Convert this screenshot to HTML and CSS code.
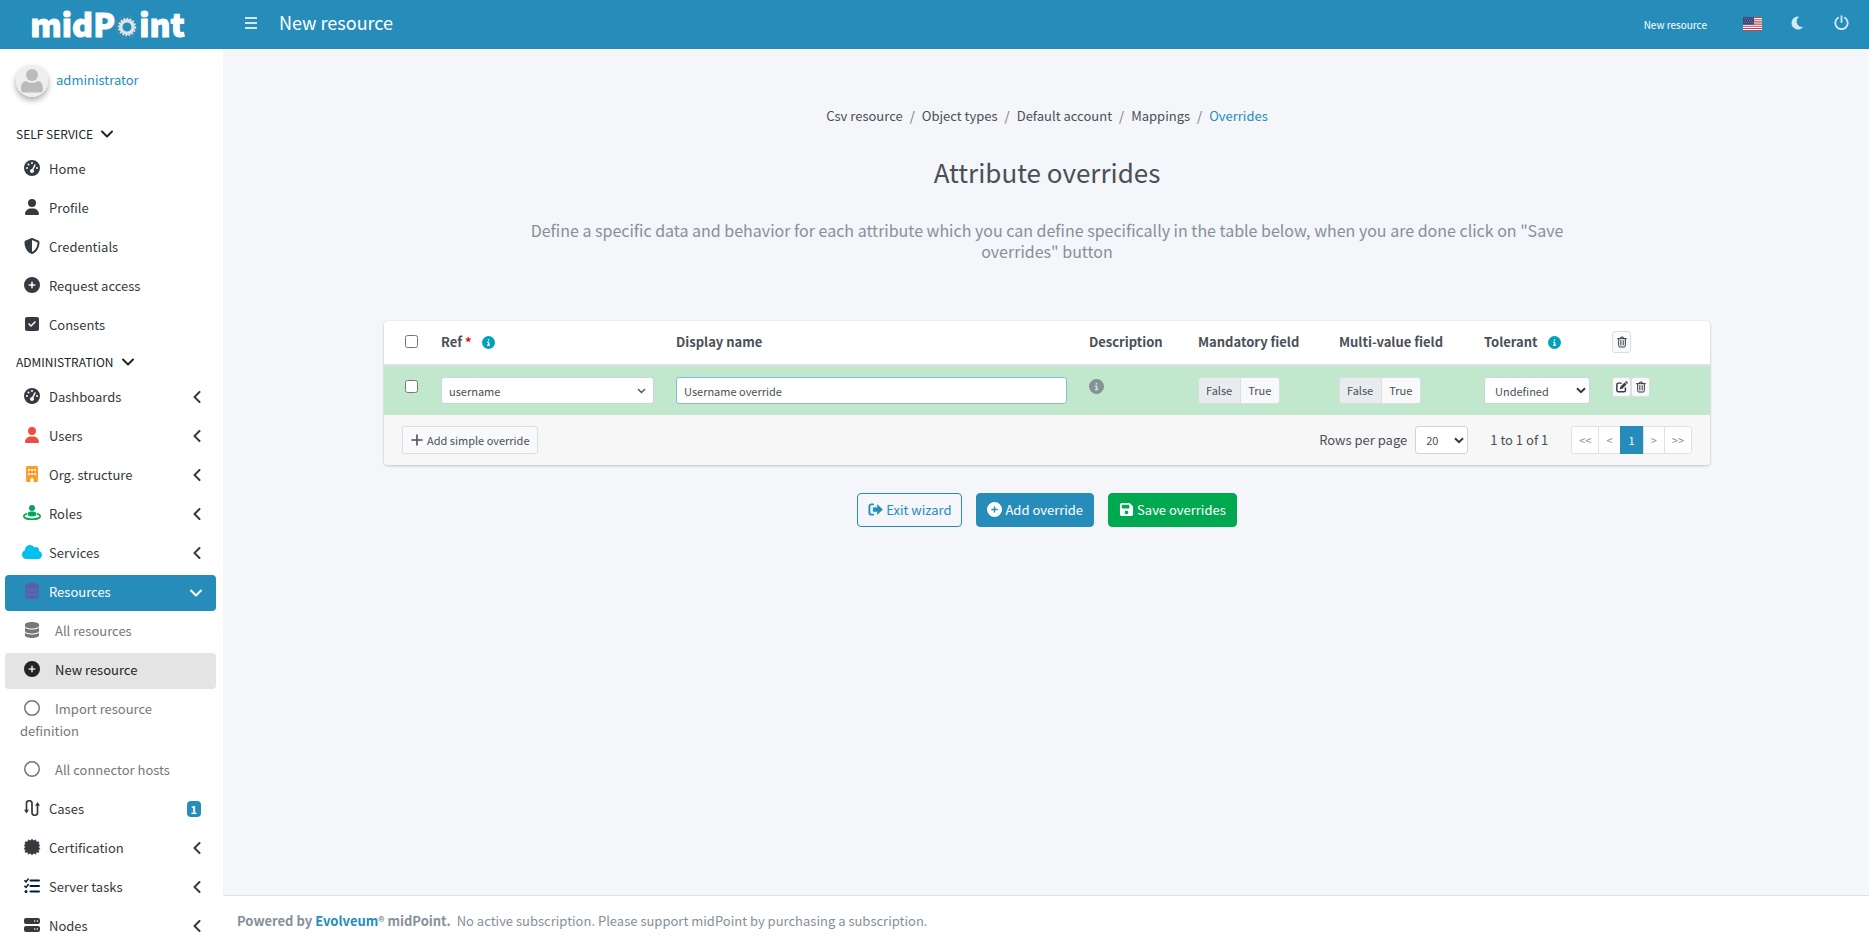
FILE: index.html
```
<!DOCTYPE html>
<html lang="en">
<head>
<meta charset="utf-8">
<title>New resource</title>
<link rel="stylesheet" href="styles.css">
</head>
<body>
<svg class="sprite" aria-hidden="true">
  <symbol id="i-gauge" viewBox="0 0 512 512"><path fill-rule="evenodd" d="M256 0a256 256 0 1 1 0 512 256 256 0 1 1 0-512zM288 96a32 32 0 1 0-64 0 32 32 0 1 0 64 0zM256 416c35.300 0 64-28.700 64-64 0-16.200-6-31.100-16-42.300l69.500-138.900c5.900-11.900 1.100-26.300-10.700-32.200s-26.300-1.100-32.200 10.700L261.100 288.200c-1.700-.1-3.400-.2-5.100-.2-35.300 0-64 28.700-64 64s28.700 64 64 64zM176 144a32 32 0 1 0-64 0 32 32 0 1 0 64 0zM96 288a32 32 0 1 0 0-64 32 32 0 1 0 0 64zm352-32a32 32 0 1 0-64 0 32 32 0 1 0 64 0z"/></symbol>
  <symbol id="i-user" viewBox="0 0 448 512"><path d="M224 256A128 128 0 1 0 224 0a128 128 0 1 0 0 256zm-45.700 48C79.800 304 0 383.800 0 482.300 0 498.700 13.300 512 29.700 512H418.300c16.400 0 29.700-13.300 29.700-29.700C448 383.800 368.200 304 269.700 304H178.300z"/></symbol>
  <symbol id="i-shield" viewBox="0 0 512 512"><path fill-rule="evenodd" d="M256 0c5 0 9 1 13 3l188 80c22 9 39 31 39 57 0 99-41 281-214 363-16 8-36 8-52 0C57 421 16 239 16 140c0-26 17-48 39-57L243 3c4-2 8-3 13-3zm0 67v378c139-67 176-216 177-304L256 67z"/></symbol>
  <symbol id="i-plus-circle" viewBox="0 0 512 512"><path fill-rule="evenodd" d="M256 512A256 256 0 1 0 256 0a256 256 0 1 0 0 512zM232 344V280H168c-13.300 0-24-10.700-24-24s10.700-24 24-24h64V168c0-13.300 10.700-24 24-24s24 10.700 24 24v64h64c13.300 0 24 10.700 24 24s-10.700 24-24 24H280v64c0 13.300-10.700 24-24 24s-24-10.700-24-24z"/></symbol>
  <symbol id="i-check" viewBox="0 0 448 512"><path fill-rule="evenodd" d="M64 32C28.700 32 0 60.700 0 96V416c0 35.300 28.700 64 64 64H384c35.300 0 64-28.700 64-64V96c0-35.300-28.700-64-64-64H64zM337 209L209 337c-9.400 9.400-24.600 9.400-33.900 0l-64-64c-9.400-9.400-9.400-24.600 0-33.900s24.600-9.400 33.900 0l47 47L303 175c9.400-9.400 24.600-9.400 33.900 0s9.400 24.600 0 33.900z"/></symbol>
  <symbol id="i-building" viewBox="0 0 384 512"><path fill-rule="evenodd" d="M48 0C21.500 0 0 21.500 0 48V464c0 26.500 21.500 48 48 48h96V432c0-26.500 21.500-48 48-48s48 21.500 48 48v80h96c26.500 0 48-21.500 48-48V48c0-26.500-21.500-48-48-48H48zM64 112c0-9 7-16 16-16h32c9 0 16 7 16 16v32c0 9-7 16-16 16H80c-9 0-16-7-16-16v-32zm96 0c0-9 7-16 16-16h32c9 0 16 7 16 16v32c0 9-7 16-16 16h-32c-9 0-16-7-16-16v-32zm96 0c0-9 7-16 16-16h32c9 0 16 7 16 16v32c0 9-7 16-16 16h-32c-9 0-16-7-16-16v-32zM64 240c0-9 7-16 16-16h32c9 0 16 7 16 16v32c0 9-7 16-16 16H80c-9 0-16-7-16-16v-32zm96 0c0-9 7-16 16-16h32c9 0 16 7 16 16v32c0 9-7 16-16 16h-32c-9 0-16-7-16-16v-32zm96 0c0-9 7-16 16-16h32c9 0 16 7 16 16v32c0 9-7 16-16 16h-32c-9 0-16-7-16-16v-32z"/></symbol>
  <symbol id="i-role" viewBox="0 0 576 512"><circle cx="288" cy="96" r="96"/><path d="M230 208h116c44 0 78 35 78 78v28c0 30-61 54-136 54s-136-24-136-54v-28c0-43 34-78 78-78z"/><path d="M110 284C60 302 26 326 26 356c0 56 117 98 262 98s262-42 262-98c0-30-34-54-84-72" fill="none" stroke="currentColor" stroke-width="52" stroke-linecap="round"/></symbol>
  <symbol id="i-cloud" viewBox="0 0 640 512"><path d="M0 336c0 79.500 64.500 144 144 144H512c70.700 0 128-57.300 128-128c0-61.900-44-113.600-102.400-125.400c4.100-10.700 6.400-22.400 6.400-34.600c0-53-43-96-96-96c-19.700 0-38.100 6-53.300 16.200C367 64.200 315.300 32 256 32C167.600 32 96 103.600 96 192c0 2.700 .1 5.400 .2 8.100C40.200 219.800 0 273.200 0 336z"/></symbol>
  <symbol id="i-db" viewBox="0 0 448 512"><path d="M448 80v48c0 44.200-100.300 80-224 80S0 172.200 0 128V80C0 35.800 100.300 0 224 0S448 35.800 448 80zM393.200 214.700c20.800-7.400 39.900-16.900 54.800-28.600V288c0 44.200-100.300 80-224 80S0 332.200 0 288V186.100c14.900 11.800 34 21.200 54.800 28.600C99.700 230.700 159.500 240 224 240s124.300-9.300 169.200-25.300zM0 346.100c14.900 11.800 34 21.200 54.800 28.600C99.700 390.700 159.500 400 224 400s124.300-9.300 169.200-25.300c20.800-7.400 39.900-16.900 54.800-28.600V432c0 44.200-100.300 80-224 80S0 476.200 0 432V346.100z"/></symbol>
  <symbol id="i-circle" viewBox="0 0 512 512"><circle cx="256" cy="256" r="232" fill="none" stroke="currentColor" stroke-width="48"/></symbol>
  <symbol id="i-route" viewBox="0 0 16 16"><path d="M2.500 11V3.500a2.700 2.700 0 0 1 5.500 0v9a2.700 2.700 0 0 0 5.500 0V4.500" fill="none" stroke="currentColor" stroke-width="1.700"/><path d="M0 9.800h5L2.500 13.500zM11 5.800h5L13.500 2z"/></symbol>
  <symbol id="i-cert" viewBox="-16 -16 32 32"><path d="M0-16l3.200 3.600L7.400-14.400l1.500 4.500 5-.7-.5 4.900L16-2.900 12.800 0 16 3l-2.600 3 .5 4.800-5-.9-1.500 4.600-4.200-2.100L0 16l-3.200-3.600-4.200 2.100-1.500-4.600-5 .9.500-4.800L-16 3l3.200-3L-16-2.900l2.600-2.800-.5-4.900 5 .7 1.500-4.500 4.200 2z" stroke="currentColor" stroke-width="1"/></symbol>
  <symbol id="i-tasks" viewBox="0 0 16 16"><path d="M6.500 2.500H15M6.500 8H15M6.500 13.500H15" fill="none" stroke="currentColor" stroke-width="2" stroke-linecap="round"/><path d="M.8 2.700L2 3.900 4.300 1M.8 8.200L2 9.400l2.300-2.900" fill="none" stroke="currentColor" stroke-width="1.500" stroke-linecap="round"/><circle cx="2" cy="13.500" r="1.500"/></symbol>
  <symbol id="i-server" viewBox="0 0 512 512"><path fill-rule="evenodd" d="M64 32C28.700 32 0 60.700 0 96v64c0 35.300 28.700 64 64 64H448c35.300 0 64-28.700 64-64V96c0-35.300-28.700-64-64-64H64zM344 104a24 24 0 1 1 0 48 24 24 0 1 1 0-48zm64 24a24 24 0 1 1 48 0 24 24 0 1 1-48 0zM64 288c-35.300 0-64 28.700-64 64v64c0 35.300 28.700 64 64 64H448c35.300 0 64-28.700 64-64V352c0-35.300-28.700-64-64-64H64zM344 360a24 24 0 1 1 0 48 24 24 0 1 1 0-48zm56 24a24 24 0 1 1 48 0 24 24 0 1 1-48 0z"/></symbol>
  <symbol id="i-left" viewBox="0 0 8 12"><path d="M6.500 1L1.500 6l5 5" fill="none" stroke="currentColor" stroke-width="2" stroke-linecap="round" stroke-linejoin="round"/></symbol>
  <symbol id="i-down" viewBox="0 0 12 8"><path d="M1 1.500l5 5 5-5" fill="none" stroke="currentColor" stroke-width="2" stroke-linecap="round" stroke-linejoin="round"/></symbol>
  <symbol id="i-info" viewBox="0 0 512 512"><path fill-rule="evenodd" d="M256 512A256 256 0 1 0 256 0a256 256 0 1 0 0 512zM216 336h24V272H216c-13.300 0-24-10.700-24-24s10.700-24 24-24h48c13.300 0 24 10.700 24 24v88h8c13.300 0 24 10.700 24 24s-10.700 24-24 24H216c-13.300 0-24-10.700-24-24s10.700-24 24-24zm40-208a32 32 0 1 1 0 64 32 32 0 1 1 0-64z"/></symbol>
  <symbol id="i-save" viewBox="0 0 448 512"><path fill-rule="evenodd" d="M64 32C28.700 32 0 60.700 0 96V416c0 35.300 28.700 64 64 64H384c35.300 0 64-28.700 64-64V173.300c0-17-6.700-33.300-18.700-45.300L352 50.700C340 38.700 323.700 32 306.700 32H64zm0 96c0-17.700 14.300-32 32-32H288c17.700 0 32 14.300 32 32v64c0 17.700-14.300 32-32 32H96c-17.700 0-32-14.300-32-32V128zM224 288a64 64 0 1 1 0 128 64 64 0 1 1 0-128z"/></symbol>
  <symbol id="i-exit" viewBox="0 0 16 16"><path d="M5.500 2.500H3.500a2 2 0 0 0-2 2v7a2 2 0 0 0 2 2h2" fill="none" stroke="currentColor" stroke-width="2" stroke-linecap="round"/><path d="M10 2.800L15.500 8 10 13.200V10H5.500V6H10z" stroke="currentColor" stroke-width=".6" stroke-linejoin="round"/></symbol>
  <symbol id="i-trash" viewBox="0 0 12 14"><path d="M.7 3h10.600M3.800 3l.9-1.900h2.600L8.200 3M2 3v8.500a1.500 1.500 0 0 0 1.500 1.500h5a1.500 1.500 0 0 0 1.500-1.500V3" fill="none" stroke="currentColor" stroke-width="1.200" stroke-linecap="round"/><path d="M4.200 5.300v5.300M6 5.300v5.300M7.800 5.300v5.300" fill="none" stroke="currentColor" stroke-width=".8" stroke-linecap="round"/></symbol>
  <symbol id="i-edit" viewBox="0 0 14 14"><path d="M6 2.500H2.700A1.700 1.700 0 0 0 1 4.200v6.600a1.700 1.700 0 0 0 1.700 1.700h6.600a1.700 1.700 0 0 0 1.700-1.700V8" fill="none" stroke="currentColor" stroke-width="1.700" stroke-linecap="round"/><path d="M4.300 9.700l.8-3L10 1.800l2.200 2.200-4.900 4.900zM10.600 1.200l.6-.6c.4-.4 1-.4 1.400 0l.8.8c.4.400.4 1 0 1.400l-.6.600z"/></symbol>
  <symbol id="i-plus" viewBox="0 0 12 12"><path d="M6 1v10M1 6h10" stroke="currentColor" stroke-width="1.600" stroke-linecap="round"/></symbol>
  <symbol id="i-bars" viewBox="0 0 14 12"><path d="M1 1h12M1 6h12M1 11h12" stroke="currentColor" stroke-width="2"/></symbol>
  <symbol id="i-moon" viewBox="0 0 12 14"><path d="M7 .5A6.500 6.500 0 1 0 11.700 11.500c.2-.3 0-.6-.3-.5A5.600 5.600 0 0 1 7.600 1.200c.3-.2.200-.6-.1-.7z"/></symbol>
  <symbol id="i-power" viewBox="0 0 14 14"><path d="M7 1v5.500M3.800 2.600a5.800 5.800 0 1 0 6.400 0" fill="none" stroke="currentColor" stroke-width="1.700" stroke-linecap="round"/></symbol>
</svg>

<div class="layout">
  <aside class="sidebar">
    <a class="brand" href="#" aria-label="midPoint"><span>midP</span><svg class="brand-gear" viewBox="0 0 24 24"><circle cx="12" cy="12" r="11.500" fill="none" stroke="#5a8ba5" stroke-width="1" stroke-dasharray="6 3"/><circle cx="12" cy="12" r="8.300" fill="none" stroke="#dfe3e6" stroke-width="1.800" stroke-dasharray="1.800 1.400"/><circle cx="12" cy="12" r="6.200" fill="none" stroke="#dfe3e6" stroke-width="3.400"/></svg><span>int</span></a>
    <div class="user">
      <svg class="avatar" viewBox="0 0 32 32"><circle cx="16" cy="16" r="16" fill="#eee"/><circle cx="16" cy="10" r="6" fill="#bbb"/><path d="M5 24c0-5 2-8 5-8 4 2.500 8 2.500 12 0 3 0 5 3 5 8 0 2-1 3.500-3 3.500H8c-2 0-3-1.500-3-3.500z" fill="#bbb"/></svg>
      <a href="#">administrator</a>
    </div>
    <nav class="menu">
      <button class="group">SELF SERVICE<svg class="chev-down"><use href="#i-down"/></svg></button>
      <a class="item" href="#"><svg class="icon"><use href="#i-gauge"/></svg>Home</a>
      <a class="item" href="#"><svg class="icon"><use href="#i-user"/></svg>Profile</a>
      <a class="item" href="#"><svg class="icon"><use href="#i-shield"/></svg>Credentials</a>
      <a class="item" href="#"><svg class="icon"><use href="#i-plus-circle"/></svg>Request access</a>
      <a class="item" href="#"><svg class="icon"><use href="#i-check"/></svg>Consents</a>
      <button class="group">ADMINISTRATION<svg class="chev-down"><use href="#i-down"/></svg></button>
      <a class="item" href="#"><svg class="icon"><use href="#i-gauge"/></svg>Dashboards<svg class="chev-left"><use href="#i-left"/></svg></a>
      <a class="item" href="#"><svg class="icon red"><use href="#i-user"/></svg>Users<svg class="chev-left"><use href="#i-left"/></svg></a>
      <a class="item" href="#"><svg class="icon orange"><use href="#i-building"/></svg>Org. structure<svg class="chev-left"><use href="#i-left"/></svg></a>
      <a class="item" href="#"><svg class="icon green"><use href="#i-role"/></svg>Roles<svg class="chev-left"><use href="#i-left"/></svg></a>
      <a class="item" href="#"><svg class="icon cyan"><use href="#i-cloud"/></svg>Services<svg class="chev-left"><use href="#i-left"/></svg></a>
      <a class="item active" href="#"><svg class="icon purple"><use href="#i-db"/></svg>Resources<svg class="chev-down"><use href="#i-down"/></svg></a>
      <a class="item sub" href="#"><svg class="icon"><use href="#i-db"/></svg>All resources</a>
      <a class="item sub current" href="#"><svg class="icon"><use href="#i-plus-circle"/></svg>New resource</a>
      <a class="item sub" href="#"><svg class="icon"><use href="#i-circle"/></svg>Import resource definition</a>
      <a class="item sub" href="#"><svg class="icon"><use href="#i-circle"/></svg>All connector hosts</a>
      <a class="item" href="#"><svg class="icon"><use href="#i-route"/></svg>Cases<span class="badge">1</span></a>
      <a class="item" href="#"><svg class="icon"><use href="#i-cert"/></svg>Certification<svg class="chev-left"><use href="#i-left"/></svg></a>
      <a class="item" href="#"><svg class="icon navy"><use href="#i-tasks"/></svg>Server tasks<svg class="chev-left"><use href="#i-left"/></svg></a>
      <a class="item" href="#"><svg class="icon"><use href="#i-server"/></svg>Nodes<svg class="chev-left"><use href="#i-left"/></svg></a>
    </nav>
  </aside>

  <div class="page">
    <header class="topbar">
      <button class="bars" aria-label="Toggle menu"><svg><use href="#i-bars"/></svg></button>
      <h1>New resource</h1>
      <a class="crumb-link" href="#">New resource</a>
      <a class="tool" href="#" aria-label="Language"><svg class="flag" viewBox="0 0 19 14"><rect width="19" height="14" fill="#fff"/><path d="M0 .5h19M0 2.700h19M0 4.900h19M0 7.100h19M0 9.300h19M0 11.500h19M0 13.500h19" stroke="#c8414f" stroke-width="1.100"/><rect width="11" height="7.600" fill="#3b4a7c"/><path d="M1 1.500h9M2 3.500h8M1 5.500h9" stroke="#8d97b8" stroke-width=".7" stroke-dasharray=".8 1.200"/></svg></a>
      <button class="tool moon" aria-label="Dark mode"><svg><use href="#i-moon"/></svg></button>
      <button class="tool power" aria-label="Log out"><svg><use href="#i-power"/></svg></button>
    </header>

    <main class="content">
      <ol class="breadcrumb">
        <li><a href="#">Csv resource</a></li><li><a href="#">Object types</a></li><li><a href="#">Default account</a></li><li><a href="#">Mappings</a></li><li class="here">Overrides</li>
      </ol>
      <h2>Attribute overrides</h2>
      <p class="lead">Define a specific data and behavior for each attribute which you can define specifically in the table below, when you are done click on "Save overrides" button</p>

      <section class="card">
        <table>
          <colgroup><col class="c-check"><col class="c-ref"><col><col class="c-desc"><col class="c-mand"><col class="c-multi"><col class="c-tol"><col class="c-act"></colgroup>
          <thead>
            <tr>
              <th class="check"><input type="checkbox" aria-label="Select all"></th>
              <th>Ref <span class="req">*</span><svg class="info"><use href="#i-info"/></svg></th>
              <th>Display name</th>
              <th>Description</th>
              <th>Mandatory field</th>
              <th>Multi-value field</th>
              <th>Tolerant<svg class="info"><use href="#i-info"/></svg></th>
              <th><button class="mini" aria-label="Delete selected"><svg><use href="#i-trash"/></svg></button></th>
            </tr>
          </thead>
          <tbody>
            <tr>
              <td class="check"><input type="checkbox" aria-label="Select row"></td>
              <td><select class="field thin" aria-label="Ref"><option>username</option></select></td>
              <td><input class="field focus" type="text" value="Username override" aria-label="Display name"></td>
              <td><svg class="desc"><use href="#i-info"/></svg></td>
              <td><div class="toggle"><button class="on">False</button><button>True</button></div></td>
              <td><div class="toggle"><button class="on">False</button><button>True</button></div></td>
              <td><select class="field bold" aria-label="Tolerant"><option>Undefined</option></select></td>
              <td><div class="minis"><button class="mini" aria-label="Edit"><svg class="pen"><use href="#i-edit"/></svg></button><button class="mini" aria-label="Delete"><svg><use href="#i-trash"/></svg></button></div></td>
            </tr>
          </tbody>
        </table>
        <div class="card-footer">
          <button class="add"><svg><use href="#i-plus"/></svg>Add simple override</button>
          <label for="rows">Rows per page</label>
          <select id="rows" class="field bold rows"><option>20</option></select>
          <span class="count">1 to 1 of 1</span>
          <ul class="pager"><li><a href="#">&lt;&lt;</a></li><li><a href="#">&lt;</a></li><li class="on"><a href="#">1</a></li><li><a href="#">&gt;</a></li><li><a href="#">&gt;&gt;</a></li></ul>
        </div>
      </section>

      <div class="actions">
        <button class="btn outline"><svg><use href="#i-exit"/></svg>Exit wizard</button>
        <button class="btn primary"><svg><use href="#i-plus-circle"/></svg>Add override</button>
        <button class="btn success"><svg><use href="#i-save"/></svg>Save overrides</button>
      </div>
    </main>

    <footer class="footer"><strong>Powered by <a href="#">Evolveum</a><span class="reg">®</span> midPoint.</strong><span>No active subscription. Please support midPoint by purchasing a subscription.</span></footer>
  </div>
</div>
</body>
</html>
```

FILE: styles.css
```
* { box-sizing: border-box; }
body {
  margin: 0;
  font: 13px/22px "Noto Sans CJK SC", "Noto Sans", sans-serif;
  color: #495057;
  background: #f4f6f9;
}
a { color: inherit; text-decoration: none; }
button, input, select { font: inherit; color: inherit; margin: 0; }
button { cursor: pointer; }
svg { fill: currentColor; flex: none; }
.sprite { position: absolute; width: 0; height: 0; }

.layout { display: flex; height: 100vh; overflow: hidden; }

/* Sidebar */
.sidebar { flex: none; width: 223px; background: #fff; overflow: hidden; }
.brand {
  display: flex; align-items: center; justify-content: center;
  height: 49px; padding: 0 8px 2px 0; background: #268dbb; color: #fff;
  font-size: 32px; font-weight: 900; line-height: 47px;
  -webkit-text-stroke: 1px #fff;
}
.brand-gear { width: 24px; height: 24px; margin-top: 7px; }
.user { display: flex; align-items: center; gap: 8px; padding: 16px 16px 21px; color: #268dbb; }
.user a { padding-bottom: 2px; }
.avatar { width: 32px; height: 32px; border-radius: 50%; box-shadow: 0 3px 6px rgba(0, 0, 0, .35); }
.menu { display: flex; flex-direction: column; padding: 0 7px 0 5px; }
.group {
  display: flex; align-items: center; gap: 8px; height: 33px; padding: 0 11px 2px;
  border: 0; background: none; color: #212529; font-size: 12px;
}
.group + .item { margin-top: 1px; }
.item + .group { margin-top: -1px; }
.chev-down { width: 12px; height: 8px; }
.chev-left { width: 8px; height: 12px; margin: 5px 8px 0 auto; }
.item {
  display: flex; align-items: flex-start; margin-bottom: 3px; padding: 6px 7px 8px;
  border-radius: 4px; color: #343a40;
}
.icon { width: 20px; height: 16px; margin: 2px 7px 0 10px; vertical-align: top; }
.item.sub { display: block; padding-left: 15px; padding-right: 16px; color: #777; }
.item.sub .icon { margin: 2px 13px 0 2px; }
.item.active { background: #268dbb; color: #fff; }
.item.active .chev-down { margin: 8px 7px 0 auto; }
.item.sub.current { background: #e4e4e4; color: #212529; }
.red { color: #eb4f43; }
.orange { color: #fd9e2b; }
.green { color: #00a65a; }
.cyan { color: #00c0ef; }
.purple { color: #605ca8; }
.navy { color: #001f3f; }
.badge {
  margin: 3px 8px 0 auto; padding: 0 4px; border-radius: 4px;
  background: #268dbb; color: #fff; font-size: 11px; font-weight: 700; line-height: 16px;
}

/* Top bar */
.page { flex: 1; min-width: 0; display: flex; flex-direction: column; }
.topbar {
  display: flex; align-items: center; flex: none; height: 49px;
  padding: 0 20px 4px 21px; background: #268dbb; color: #fff;
}
.topbar button { padding: 0; border: 0; background: none; color: #d3e8f1; line-height: 0; }
.bars svg { width: 14px; height: 12px; }
.topbar h1 { margin: 0 auto 1px 21px; font-size: 18px; font-weight: 400; }
.crumb-link { font-size: 10px; padding-top: 4px; }
.tool { line-height: 0; }
.flag { width: 19px; height: 14px; margin: 3px 29px 0 36px; }
.moon svg { width: 12px; height: 14px; margin-right: 31px; }
.power svg { width: 15px; height: 15px; }

/* Main */
.content { flex: 1; padding: 56px 159px 0 161px; }
.breadcrumb { display: flex; justify-content: center; margin: 0; padding: 0; list-style: none; }
.breadcrumb li + li::before { content: "/"; padding: 0 7px; color: #6c757d; }
.here { color: #268dbb; }
h2 { margin: 28px 0 0; font-size: 26px; font-weight: 400; line-height: 34px; text-align: center; }
.lead {
  margin: 31px 140px 0; font-size: 16px; line-height: 21px;
  text-align: center; color: #869099;
}
.card {
  margin-top: 59px; border-radius: 4px; background: #fff; overflow: hidden;
  box-shadow: 0 0 1px rgba(0, 0, 0, .13), 0 1px 3px rgba(0, 0, 0, .2);
}
table { width: 100%; border-collapse: collapse; table-layout: fixed; }
.c-check { width: 45px; }
.c-ref { width: 235px; }
.c-desc { width: 109px; }
.c-mand { width: 141px; }
.c-multi { width: 145px; }
.c-tol { width: 128px; }
.c-act { width: 110px; }
th, td { padding: 0 10px 0 12px; text-align: left; white-space: nowrap; }
th { height: 44px; padding-bottom: 2px; font-weight: 700; border-bottom: 2px solid #dee2e6; }
th .info { width: 13px; height: 13px; margin-left: 10px; color: #00a2b8; vertical-align: -2px; }
.req { color: red; }
td { height: 49px; padding-top: 11px; padding-bottom: 11px; vertical-align: top; background: #c1e7cd; }
.check { padding-left: 21px; padding-right: 0; }
.check input { display: block; width: 13px; height: 13px; }
td.check input { margin-top: 3px; }
.field {
  display: block; width: 100%; height: 27px; padding: 0 7px;
  border: 1px solid #ced4da; border-radius: 3px; background-color: #fff;
  font-size: 11px; line-height: 24px; outline: 0;
}
select.field { appearance: none; background-repeat: no-repeat; background-position: right 7px center; }
.thin { background-image: url("data:image/svg+xml,%3Csvg xmlns='http://www.w3.org/2000/svg' width='9' height='6'%3E%3Cpath d='M1 1l3.500 3.500L8 1' fill='none' stroke='%23495057' stroke-width='1.300'/%3E%3C/svg%3E"); }
.bold { padding-left: 10px; background-image: url("data:image/svg+xml,%3Csvg xmlns='http://www.w3.org/2000/svg' width='10' height='7'%3E%3Cpath d='M1 1.200l4 4 4-4' fill='none' stroke='%23343a40' stroke-width='2'/%3E%3C/svg%3E"); }
select.field.bold { background-position: right 3px center; }
.focus { border-color: #80bfdc; }
.desc { display: block; width: 15px; height: 15px; margin-top: 2px; color: #869099; }
.toggle { display: inline-flex; border: 1px solid #ddd; border-radius: 3px; overflow: hidden; }
.toggle button { height: 25px; padding: 0 8px 1px 7px; border: 0; background: #f8f9fa; font-size: 11px; line-height: 24px; }
.toggle .on { background: #e9ecef; border-right: 1px solid #ddd; }
.mini {
  display: inline-flex; align-items: center; justify-content: center;
  width: 19px; height: 22px; padding: 0; vertical-align: middle;
  border: 1px solid #ddd; border-radius: 3px; background: #f8f9fa; color: #343a40;
}
.mini svg { width: 10px; height: 12px; }
.mini .pen { width: 12px; height: 12px; }
.minis { display: flex; }
.minis .mini { height: 20px; }

.card-footer { display: flex; align-items: center; height: 50px; padding: 0 18px; background: #f7f7f7; }
.add {
  display: flex; align-items: center; gap: 4px; height: 28px; margin-right: auto; padding: 0 7px 1px 8px;
  border: 1px solid #ddd; border-radius: 3px; background: #f8f9fa; font-size: 11px;
}
.add svg { width: 12px; height: 12px; }
.card-footer label { padding-bottom: 1px; }
.rows { width: 53px; height: 28px; margin: 0 22px 0 8px; }
.count { margin-right: 23px; }
.pager { display: flex; margin: 0; padding: 0; list-style: none; font-size: 11px; line-height: 26px; color: #869099; }
.pager li { border: 1px solid #dee2e6; background: #fff; text-align: center; }
.pager li + li { margin-left: -1px; }
.pager li:first-child { border-radius: 3px 0 0 3px; }
.pager li:last-child { border-radius: 0 3px 3px 0; }
.pager a { display: block; padding: 0 7px; }
.pager .on { background: #268dbb; border-color: #268dbb; color: #fff; }
.pager .on a { padding: 0 8px; }

.actions { display: flex; justify-content: center; gap: 14px; margin-top: 28px; }
.btn {
  display: flex; align-items: center; gap: 3px; height: 34px; padding: 0 10px 1px;
  border: 1px solid #268dbb; border-radius: 4px;
}
.btn svg { width: 15px; height: 15px; }
.outline { background: none; color: #268dbb; }
.primary { background: #268dbb; color: #fff; }
.success { background: #00a84f; border-color: #00a84f; color: #fff; }

.footer {
  display: flex; align-items: center; gap: 6px; flex: none; height: 50px; padding: 0 14px;
  border-top: 1px solid #dee2e6; background: #fff; color: #869099;
}
.footer a { color: #268dbb; }
.reg { font-size: 12px; }
```
